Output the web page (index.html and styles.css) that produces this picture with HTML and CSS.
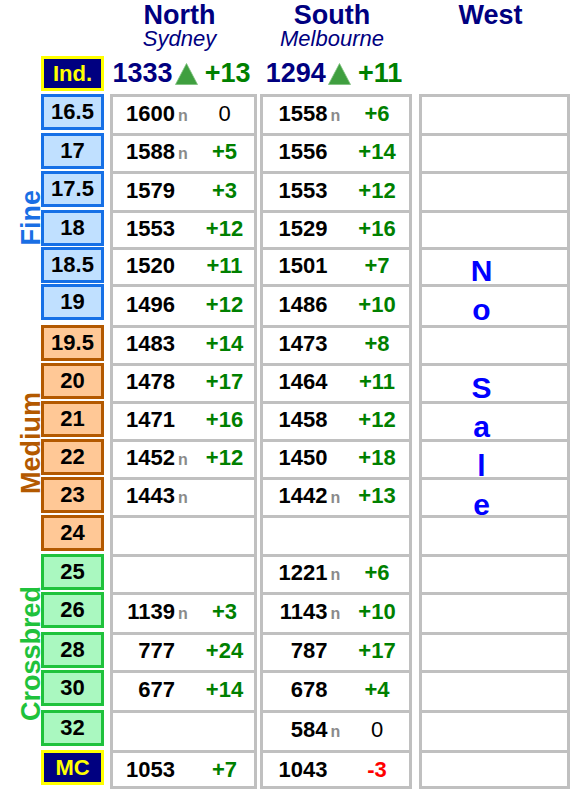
FILE: index.html
```html
<!DOCTYPE html>
<html>
<head>
<meta charset="utf-8">
<link rel="stylesheet" href="styles.css">
</head>
<body>
<div class="board">
  <div class="hd col-n"><div class="hd-t">North</div><div class="hd-s">Sydney</div></div>
  <div class="hd col-s"><div class="hd-t">South</div><div class="hd-s">Melbourne</div></div>
  <div class="hd col-w"><div class="hd-t">West</div></div>

  <div class="lab lab-y">Ind.</div>
  <div class="idx col-n"><span class="iv">1333</span><svg class="tri" width="23" height="22" viewBox="0 0 23 22"><polygon points="11.5,0.5 22.5,21.5 0.5,21.5" fill="#3f9f3f" stroke="#7cc07c" stroke-width="0.8"/></svg><span class="ic">+13</span></div>
  <div class="idx col-s"><span class="iv">1294</span><svg class="tri" width="23" height="22" viewBox="0 0 23 22"><polygon points="11.5,0.5 22.5,21.5 0.5,21.5" fill="#3f9f3f" stroke="#7cc07c" stroke-width="0.8"/></svg><span class="ic">+11</span></div>

  <!-- Fine -->
  <div class="grp grp-fine"><span class="grp-t">Fine</span></div>
  <div class="lab lab-b">16.5</div>
  <div class="cell col-n"><div class="in"><span class="v">1600</span><span class="n">n</span><span class="c zero">0</span></div></div>
  <div class="cell col-s"><div class="in"><span class="v">1558</span><span class="n">n</span><span class="c">+6</span></div></div>
  <div class="cell col-w"></div>

  <div class="lab lab-b">17</div>
  <div class="cell col-n"><div class="in"><span class="v">1588</span><span class="n">n</span><span class="c">+5</span></div></div>
  <div class="cell col-s"><div class="in"><span class="v">1556</span><span class="n"></span><span class="c">+14</span></div></div>
  <div class="cell col-w"></div>

  <div class="lab lab-b">17.5</div>
  <div class="cell col-n"><div class="in"><span class="v">1579</span><span class="n"></span><span class="c">+3</span></div></div>
  <div class="cell col-s"><div class="in"><span class="v">1553</span><span class="n"></span><span class="c">+12</span></div></div>
  <div class="cell col-w"></div>

  <div class="lab lab-b">18</div>
  <div class="cell col-n"><div class="in"><span class="v">1553</span><span class="n"></span><span class="c">+12</span></div></div>
  <div class="cell col-s"><div class="in"><span class="v">1529</span><span class="n"></span><span class="c">+16</span></div></div>
  <div class="cell col-w"></div>

  <div class="lab lab-b">18.5</div>
  <div class="cell col-n"><div class="in"><span class="v">1520</span><span class="n"></span><span class="c">+11</span></div></div>
  <div class="cell col-s"><div class="in"><span class="v">1501</span><span class="n"></span><span class="c">+7</span></div></div>
  <div class="cell col-w"></div>

  <div class="lab lab-b">19</div>
  <div class="cell col-n"><div class="in"><span class="v">1496</span><span class="n"></span><span class="c">+12</span></div></div>
  <div class="cell col-s"><div class="in"><span class="v">1486</span><span class="n"></span><span class="c">+10</span></div></div>
  <div class="cell col-w"></div>

  <!-- Medium -->
  <div class="grp grp-med"><span class="grp-t">Medium</span></div>
  <div class="lab lab-o">19.5</div>
  <div class="cell col-n"><div class="in"><span class="v">1483</span><span class="n"></span><span class="c">+14</span></div></div>
  <div class="cell col-s"><div class="in"><span class="v">1473</span><span class="n"></span><span class="c">+8</span></div></div>
  <div class="cell col-w"></div>

  <div class="lab lab-o">20</div>
  <div class="cell col-n"><div class="in"><span class="v">1478</span><span class="n"></span><span class="c">+17</span></div></div>
  <div class="cell col-s"><div class="in"><span class="v">1464</span><span class="n"></span><span class="c">+11</span></div></div>
  <div class="cell col-w"></div>

  <div class="lab lab-o">21</div>
  <div class="cell col-n"><div class="in"><span class="v">1471</span><span class="n"></span><span class="c">+16</span></div></div>
  <div class="cell col-s"><div class="in"><span class="v">1458</span><span class="n"></span><span class="c">+12</span></div></div>
  <div class="cell col-w"></div>

  <div class="lab lab-o">22</div>
  <div class="cell col-n"><div class="in"><span class="v">1452</span><span class="n">n</span><span class="c">+12</span></div></div>
  <div class="cell col-s"><div class="in"><span class="v">1450</span><span class="n"></span><span class="c">+18</span></div></div>
  <div class="cell col-w"></div>

  <div class="lab lab-o">23</div>
  <div class="cell col-n"><div class="in"><span class="v">1443</span><span class="n">n</span><span class="c"></span></div></div>
  <div class="cell col-s"><div class="in"><span class="v">1442</span><span class="n">n</span><span class="c">+13</span></div></div>
  <div class="cell col-w"></div>

  <div class="lab lab-o">24</div>
  <div class="cell col-n"></div>
  <div class="cell col-s"></div>
  <div class="cell col-w"></div>

  <!-- Crossbred -->
  <div class="grp grp-xb"><span class="grp-t">Crossbred</span></div>
  <div class="lab lab-g">25</div>
  <div class="cell col-n"></div>
  <div class="cell col-s"><div class="in"><span class="v">1221</span><span class="n">n</span><span class="c">+6</span></div></div>
  <div class="cell col-w"></div>

  <div class="lab lab-g">26</div>
  <div class="cell col-n"><div class="in"><span class="v">1139</span><span class="n">n</span><span class="c">+3</span></div></div>
  <div class="cell col-s"><div class="in"><span class="v">1143</span><span class="n">n</span><span class="c">+10</span></div></div>
  <div class="cell col-w"></div>

  <div class="lab lab-g">28</div>
  <div class="cell col-n"><div class="in"><span class="v">777</span><span class="n"></span><span class="c">+24</span></div></div>
  <div class="cell col-s"><div class="in"><span class="v">787</span><span class="n"></span><span class="c">+17</span></div></div>
  <div class="cell col-w"></div>

  <div class="lab lab-g">30</div>
  <div class="cell col-n"><div class="in"><span class="v">677</span><span class="n"></span><span class="c">+14</span></div></div>
  <div class="cell col-s"><div class="in"><span class="v">678</span><span class="n"></span><span class="c">+4</span></div></div>
  <div class="cell col-w"></div>

  <div class="lab lab-g">32</div>
  <div class="cell col-n"></div>
  <div class="cell col-s"><div class="in"><span class="v">584</span><span class="n">n</span><span class="c zero">0</span></div></div>
  <div class="cell col-w"></div>

  <!-- MC -->
  <div class="lab lab-y lab-mc">MC</div>
  <div class="cell col-n last"><div class="in"><span class="v">1053</span><span class="n"></span><span class="c">+7</span></div></div>
  <div class="cell col-s last"><div class="in"><span class="v">1043</span><span class="n"></span><span class="c neg">-3</span></div></div>
  <div class="cell col-w last"></div>

  <div class="nosale">N<br>o<br><br>S<br>a<br>l<br>e</div>
</div>
</body>
</html>
```

FILE: styles.css
```css
html, body {
  margin: 0;
  padding: 0;
  background: #ffffff;
}

body {
  font-family: "Liberation Sans", Arial, sans-serif;
  color: #000;
}

.board {
  position: relative;
  display: grid;
  grid-template-columns: 41px 63px 6px 147px 3px 152px 7px 151px;
  grid-template-rows: 56px 38px 39px 38px 39px 37px 37px 41px 38px 38px 38px 38px 38px 39px 38px 40px 38px 40px 40px 39px;
  width: 584px;
}

.col-n { grid-column: 4; }
.col-s { grid-column: 6; }
.col-w { grid-column: 8; }

/* headings */
.hd {
  text-align: center;
  padding: 3px 8px 0 0;
  color: #000080;
}
.hd-t {
  font-size: 27px;
  font-weight: bold;
  line-height: 25px;
}
.hd-s {
  font-size: 22px;
  font-style: italic;
  line-height: 20px;
  margin-top: 1px;
}

/* index row */
.idx {
  height: 35px;
  display: flex;
  align-items: center;
  justify-content: center;
  padding-right: 4px;
}
.iv {
  font-size: 27px;
  font-weight: bold;
  color: #000080;
}
.tri {
  display: block;
  margin: 0 7px 0 2px;
}
.ic {
  font-size: 27px;
  font-weight: bold;
  color: #008000;
}

/* group labels */
.grp {
  grid-column: 1;
  display: flex;
  align-items: center;
  justify-content: flex-end;
  padding-right: 1px;
}
.grp-fine { grid-row: span 6; padding-top: 17px; color: #1a6fe4; }
.grp-med { grid-row: span 6; padding-top: 8px; color: #b35900; }
.grp-xb { grid-row: span 5; padding-top: 4px; color: #1fc23c; }
.grp-t {
  writing-mode: vertical-rl;
  transform: rotate(180deg);
  font-size: 27px;
  font-weight: bold;
  line-height: 18px;
  white-space: nowrap;
}

/* grade label boxes */
.lab {
  grid-column: 2;
  align-self: start;
  box-sizing: border-box;
  height: 36px;
  border: 3px solid;
  display: flex;
  align-items: center;
  justify-content: center;
  font-size: 22px;
  font-weight: bold;
}
.lab-y {
  height: 35px;
  background: #000080;
  border-color: #ffff00;
  color: #ffff00;
}
.lab-b { background: #c0e0ff; border-color: #1670e6; }
.lab-o { background: #ffc896; border-color: #b35900; }
.lab-g { background: #aaf8c0; border-color: #1fc23c; }

/* data cells */
.cell {
  box-sizing: border-box;
  border-left: 3px solid #c0c0c0;
  border-right: 3px solid #c0c0c0;
  border-top: 3px solid #c0c0c0;
  background: #fff;
  display: flex;
  align-items: center;
  justify-content: center;
  padding-bottom: 3px;
}
.cell.last {
  border-bottom: 3px solid #c0c0c0;
  padding-bottom: 0;
}
.in {
  display: flex;
  align-items: baseline;
  width: 139px;
  flex: none;
}
.v {
  width: 61px;
  text-align: right;
  font-size: 22px;
  font-weight: bold;
}
.n {
  box-sizing: border-box;
  width: 21px;
  padding-left: 3px;
  font-size: 16px;
  font-weight: bold;
  color: #8a8a8a;
}
.c {
  width: 57px;
  text-align: center;
  font-size: 22px;
  font-weight: bold;
  color: #008000;
}
.c.zero {
  font-weight: normal;
  color: #000;
}
.c.neg {
  color: #ff0000;
}

/* overlay text across the West column */
.nosale {
  position: absolute;
  grid-column: 8 / 9;
  grid-row: 7 / 21;
  left: 0;
  right: 26px;
  top: 4px;
  text-align: center;
  font-size: 30px;
  font-weight: bold;
  line-height: 39px;
  color: #0000ff;
}
```
